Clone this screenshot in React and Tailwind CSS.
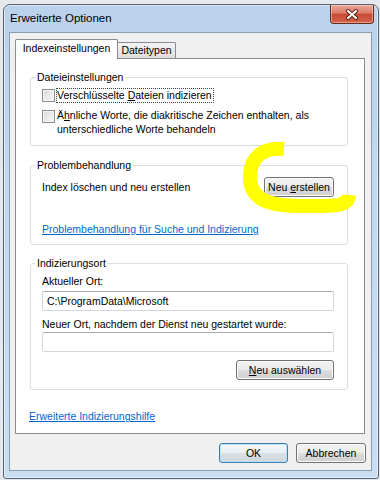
import React from "react";

const FONT = "font-['Liberation_Sans',Arial,sans-serif]";

function WinButton({ children, className = "", isDefault = false }) {
  return (
    <div
      className={
        isDefault
          ? `h-[20px] shrink-0 rounded-[3px] border border-[#3c7fb1] bg-[linear-gradient(to_bottom,#f4f8fb_0%,#e9eef2_50%,#dae0e5_51%,#cfd6dc_100%)] shadow-[inset_0_0_0_1px_#b9e2f7] flex items-center justify-center text-[10.5px] leading-[13px] text-black ${className}`
          : `h-[20px] shrink-0 rounded-[3px] border border-[#707070] bg-[linear-gradient(to_bottom,#f2f2f2_0%,#ebebeb_50%,#dddddd_51%,#cfcfcf_100%)] shadow-[inset_0_0_0_1px_#fbfbfb] flex items-center justify-center text-[10.5px] leading-[13px] text-black ${className}`
      }
    >
      {children}
    </div>
  );
}

function Checkbox() {
  return (
    <span className="block w-[13px] h-[13px] shrink-0 border border-[#8e8f8f] bg-[linear-gradient(135deg,#d8d8d8_0%,#ececec_60%,#f8f8f8_100%)] shadow-[inset_0_0_0_1px_#f4f4f4]" />
  );
}

function TextBox({ value }) {
  return (
    <div className="h-[20px] rounded-[2px] border border-[#d3d6dc] border-t-[#abadb3] bg-white flex items-center pl-[4px] text-[10.5px] leading-[13px] text-black">
      {value}
    </div>
  );
}

function Group({ title, children, className = "" }) {
  return (
    <fieldset className={`ml-[14px] mr-[16px] rounded-[3px] border border-[#d5dfe5] ${className}`}>
      <legend className="ml-[4px] px-[2px] text-[10.5px] leading-[13px] text-black">{title}</legend>
      {children}
    </fieldset>
  );
}

export default function App() {
  return (
    <div className={`relative w-[380px] h-[480px] overflow-hidden bg-[#e5e8ec] pt-[4px] pl-[3px] ${FONT}`}>
      {/* window */}
      <div className="w-[376px] h-[475px] rounded-t-[7px] rounded-b-[3px] border border-[#556373] bg-[linear-gradient(to_bottom,#bad2eb_0%,#c2d8ef_40%,#cadef2_100%)] shadow-[inset_0_0_0_1px_rgba(255,255,255,0.5)] flex flex-col pl-[5px] pr-[6px] pb-[7px]">
        {/* title bar */}
        <div className="h-[27px] shrink-0 flex items-start justify-between">
          <span className="pl-[1px] pt-[6px] text-[11.5px] leading-[14px] text-black">Erweiterte Optionen</span>
          <div className="w-[44px] h-[19px] -mr-[2px] rounded-b-[4px] border border-t-0 border-[#6b2a1f] bg-[linear-gradient(to_bottom,#e9a897_0%,#dc7c68_45%,#c84a33_52%,#d2654c_100%)] shadow-[inset_0_0_0_1px_rgba(255,230,220,0.45)] flex items-center justify-center">
            <svg width="14" height="11" viewBox="0 0 14 11">
              <path d="M3 2 L11 9 M11 2 L3 9" stroke="#5a1d14" strokeWidth="4" strokeLinecap="round" />
              <path d="M3 2 L11 9 M11 2 L3 9" stroke="#ffffff" strokeWidth="2.2" strokeLinecap="round" />
            </svg>
          </div>
        </div>

        {/* client area */}
        <div className="flex-1 border border-[#8a9db3] bg-[#f0f0f0] flex flex-col">
          <div className="pl-[5px] pr-[6px] pt-[6px]">
            {/* tabs */}
            <div className="flex items-end h-[19px]">
              <div className="relative z-10 w-[103px] h-[20px] -mb-[1px] rounded-t-[2px] border border-b-0 border-[#898c95] bg-white flex justify-center pt-[2px] text-[10.5px] leading-[13px] text-black">
                Indexeinstellungen
              </div>
              <div className="w-[59px] h-[16px] -ml-[1px] rounded-t-[2px] border border-b-0 border-[#898c95] bg-[linear-gradient(to_bottom,#f4f4f4_0%,#e8e8e8_50%,#dddddd_100%)] flex justify-center pt-[1px] text-[10.5px] leading-[13px] text-black">
                Dateitypen
              </div>
            </div>

            {/* tab page */}
            <div className="h-[376px] border border-[#898c95] bg-white flex flex-col">
              <Group title="Dateieinstellungen" className="mt-[12px]">
                <div className="pl-[11px] pr-[13px] pt-[4px] pb-[9px] text-[10.5px] text-black">
                  <div className="flex items-center h-[15px]">
                    <Checkbox />
                    <span className="ml-[1px] h-[15px] border border-dotted border-[#404040] pr-[1px] leading-[13px]">
                      Verschlüsselte <span className="underline">D</span>ateien indizieren
                    </span>
                  </div>
                  <div className="flex items-start mt-[6px]">
                    <span className="mt-[1px]">
                      <Checkbox />
                    </span>
                    <span className="ml-[2px] leading-[13.5px]">
                      Ä<span className="underline">h</span>nliche Worte, die diakritische Zeichen enthalten, als
                      <br />
                      unterschiedliche Worte behandeln
                    </span>
                  </div>
                </div>
              </Group>

              <Group title="Problembehandlung" className="mt-[13px]">
                <div className="pl-[11px] pr-[13px] pt-[5px] pb-[8px] text-[10.5px] text-black">
                  <div className="flex items-center justify-between h-[20px]">
                    <span className="leading-[14px]">Index löschen und neu erstellen</span>
                    <WinButton className="w-[70px]">
                      <span>
                        Neu <span className="underline">e</span>rstellen
                      </span>
                    </WinButton>
                  </div>
                  <div className="mt-[25px] leading-[14px] text-[#0066cc] underline">
                    Problembehandlung für Suche und Indizierung
                  </div>
                </div>
              </Group>

              <Group title="Indizierungsort" className="mt-[12px]">
                <div className="pl-[11px] pr-[13px] pt-[4px] pb-[9px] text-[10.5px] text-black">
                  <div className="leading-[14px]">Aktueller Ort:</div>
                  <div className="mt-[3px]">
                    <TextBox value="C:\ProgramData\Microsoft" />
                  </div>
                  <div className="mt-[6px] leading-[14px]">Neuer Ort, nachdem der Dienst neu gestartet wurde:</div>
                  <div className="mt-[1px]">
                    <TextBox value="" />
                  </div>
                  <div className="mt-[8px] flex justify-end">
                    <WinButton className="w-[98px]">
                      <span>
                        <span className="underline">N</span>eu auswählen
                      </span>
                    </WinButton>
                  </div>
                </div>
              </Group>

              <div className="mt-[19px] pl-[13px] text-[10.5px] leading-[14px] text-[#0066cc]">
                <span className="underline">Erweiterte Indizierungshilfe</span>
              </div>
            </div>
          </div>

          {/* dialog buttons */}
          <div className="mt-[9px] pr-[5px] flex justify-end gap-[8px]">
            <WinButton isDefault className="w-[69px]">OK</WinButton>
            <WinButton className="w-[70px]">Abbrechen</WinButton>
          </div>
        </div>
      </div>

      {/* yellow highlighter mark */}
      <svg className="absolute inset-0 pointer-events-none" width="380" height="480" viewBox="0 0 380 480">
        <path
          d="M284 149 C262 147 250 158 250 177 C250 199 268 206 300 206 C330 206 348 208 349 195"
          fill="none"
          stroke="#ffff00"
          strokeWidth="14"
          strokeLinejoin="round"
        />
      </svg>
    </div>
  );
}
